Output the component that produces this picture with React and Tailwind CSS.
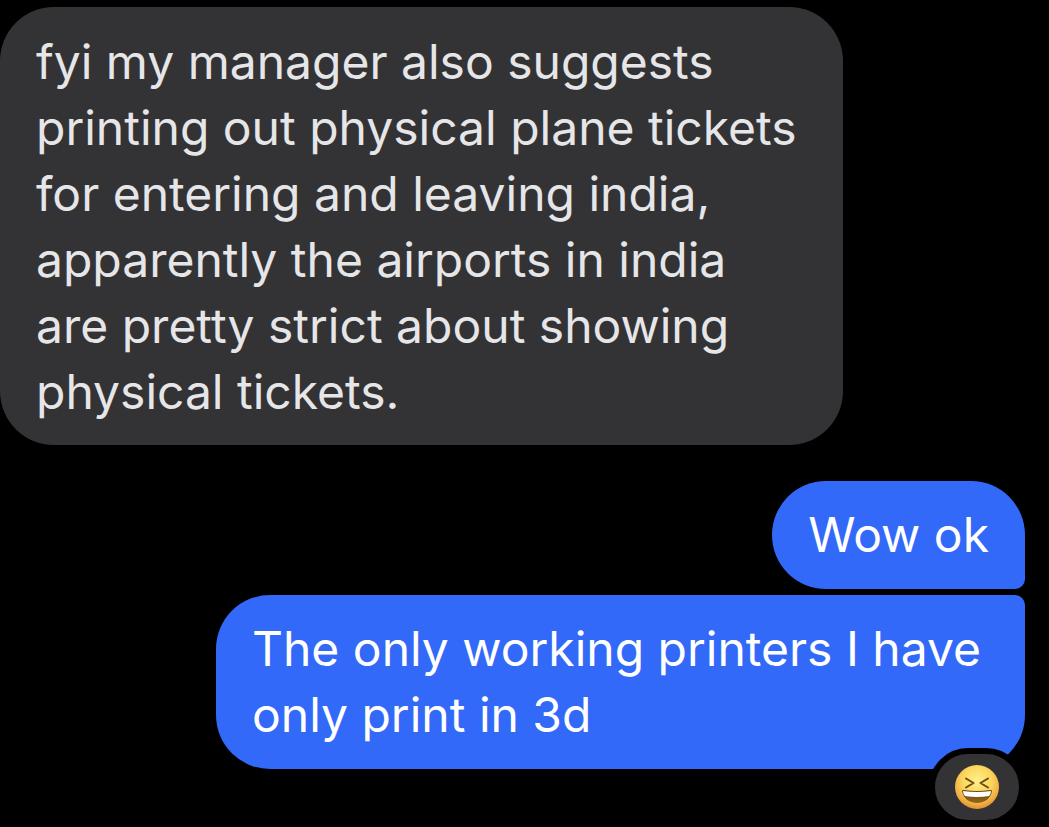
function LaughingEmoji() {
  return (
    <svg className="size-[46px]" viewBox="0 0 46 46" role="img" aria-label="Laughing face">
      <defs>
        <radialGradient id="face" cx="0.5" cy="0.36" r="0.66">
          <stop offset="0" stopColor="#fff08c" />
          <stop offset="0.5" stopColor="#fbd65c" />
          <stop offset="0.8" stopColor="#efb043" />
          <stop offset="1" stopColor="#d98a2c" />
        </radialGradient>
        <linearGradient id="mouth" x1="0" y1="0" x2="0" y2="1">
          <stop offset="0" stopColor="#6b430c" />
          <stop offset="1" stopColor="#94661c" />
        </linearGradient>
      </defs>
      <circle cx="23" cy="23" r="22" fill="url(#face)" />
      <path
        d="M12 14.500l7.500 4.500-7.500 4.500M34 14.500l-7.500 4.500 7.500 4.500"
        fill="none"
        stroke="#6e4a10"
        strokeWidth="2"
        strokeLinecap="round"
        strokeLinejoin="round"
      />
      <path d="M8 27c0-1 1-1 2-1q13 2 26 0c1 0 2 0 2 1-1 7-7 12-15 12S9 34 8 27z" fill="url(#mouth)" />
      <path d="M9 27q14 2 28 0 0 3-2 5-12 2-24 0-2-2-2-5z" fill="#fff" />
    </svg>
  );
}

function Bubble({ children, className }) {
  return (
    <p className={`w-fit rounded-[54px] pl-9 text-[48px] leading-[66px] ${className}`}>
      {children}
    </p>
  );
}

export default function App() {
  return (
    <main className="min-h-screen overflow-hidden bg-black pt-[7px] pr-6 font-['Inter',sans-serif]">
      <Bubble className="max-w-[843px] bg-[#333335] pt-[22px] pr-11 pb-5 text-[#e6e6e8]">
        fyi my manager also suggests printing out physical plane tickets for entering and leaving
        india, apparently the airports in india are pretty strict about showing physical tickets.
      </Bubble>
      <div className="mt-9 flex flex-col items-end gap-[6px] text-white">
        <Bubble className="rounded-br-[10px] bg-[#3269f8] py-[21px] pr-9">Wow ok</Bubble>
        <div className="relative">
          <Bubble className="max-w-[809px] rounded-tr-[10px] bg-[#3269f8] py-[21px] pr-9">
            The only working printers I have only print in 3d
          </Bubble>
          <button className="absolute right-0 -bottom-[57px] flex h-[78px] w-24 items-center justify-center rounded-full border-[6px] border-black bg-[#333335]">
            <LaughingEmoji />
          </button>
        </div>
      </div>
    </main>
  );
}
